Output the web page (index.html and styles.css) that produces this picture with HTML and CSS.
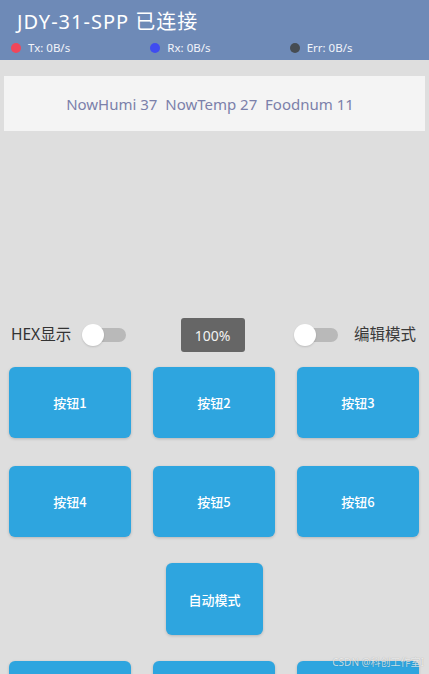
FILE: index.html
```html
<!DOCTYPE html>
<html lang="zh">

<head>
    <meta charset="UTF-8">
    <meta name="viewport" content="width=device-width, initial-scale=1.0">
    <title>JDY-31-SPP</title>
    <link rel="stylesheet" href="styles.css">
</head>

<body>
    <header class="topbar">
        <h1 class="title">JDY-31-SPP 已连接</h1>
        <div class="stats">
            <div class="stat"><span class="dot dot-tx"></span>Tx: 0B/s</div>
            <div class="stat"><span class="dot dot-rx"></span>Rx: 0B/s</div>
            <div class="stat"><span class="dot dot-err"></span>Err: 0B/s</div>
        </div>
    </header>

    <div class="panel">NowHumi 37&nbsp; NowTemp 27&nbsp; Foodnum 11</div>

    <div class="controls">
        <div class="switch-group">
            <span class="label">HEX显示</span>
            <span class="toggle"><span class="knob"></span></span>
        </div>
        <div class="zoom">100%</div>
        <div class="switch-group">
            <span class="toggle"><span class="knob"></span></span>
            <span class="label label-right">编辑模式</span>
        </div>
    </div>

    <div class="buttons">
        <button class="btn">按钮1</button>
        <button class="btn">按钮2</button>
        <button class="btn">按钮3</button>
        <button class="btn">按钮4</button>
        <button class="btn">按钮5</button>
        <button class="btn">按钮6</button>
    </div>

    <div class="center-row">
        <button class="btn btn-auto">自动模式</button>
    </div>

    <!-- next row starts at the bottom edge, labels are out of view -->
    <div class="buttons">
        <button class="btn"></button>
        <button class="btn"></button>
        <button class="btn"></button>
    </div>

    <div class="watermark">CSDN @科创工作室I</div>
</body>

</html>
```

FILE: styles.css
```css
* {
    box-sizing: border-box;
    margin: 0;
    padding: 0;
}

body {
    font-family: 'Noto Sans', 'Noto Sans CJK SC', sans-serif;
    background-color: #dedede;
    width: 429px;
    height: 674px;
    overflow: hidden;
    position: relative;
}

.topbar {
    background-color: #6e8ab7;
    height: 60px;
    padding: 9px 0 0 17px;
    color: #fff;
}

.title {
    font-size: 20px;
    font-weight: 400;
    line-height: 26px;
    letter-spacing: 1px;
}

.stats {
    display: flex;
    margin-left: -6px;
    margin-top: 6px;
}

.stat {
    display: flex;
    align-items: center;
    width: 140px;
    font-size: 11.5px;
    line-height: 14px;
    color: #f2f4fa;
}

.dot {
    width: 10px;
    height: 10px;
    border-radius: 50%;
    margin-right: 7px;
}

.dot-tx { background-color: #f0465a; }
.dot-rx { background-color: #3f4cf0; }
.dot-err { background-color: #464c52; }

.panel {
    margin: 16px 4px 0;
    height: 55px;
    background-color: #f4f4f4;
    color: #7b80aa;
    font-size: 15px;
    display: flex;
    align-items: center;
    justify-content: center;
    padding-right: 9px;
}

.controls {
    display: flex;
    justify-content: space-between;
    align-items: center;
    height: 34px;
    margin-top: 187px;
    padding: 0 13px 0 11px;
}

.switch-group {
    display: flex;
    align-items: center;
    width: 122px;
}

.label {
    font-size: 15.5px;
    line-height: 20px;
    color: #333;
    margin-right: 11px;
    margin-top: -3px;
}

.label-right {
    margin: -3px 0 0 16px;
    color: #3a3a3a;
}

.toggle {
    position: relative;
    width: 44px;
    height: 22px;
    display: inline-block;
}

.toggle::before {
    content: '';
    position: absolute;
    left: 8px;
    right: 0;
    top: 4px;
    height: 14px;
    border-radius: 7px;
    background-color: #b9b9b9;
}

.knob {
    position: absolute;
    left: 0;
    top: 0;
    width: 22px;
    height: 22px;
    border-radius: 50%;
    background-color: #fff;
    box-shadow: 0 1px 2px rgba(0, 0, 0, 0.15);
}

.zoom {
    width: 64px;
    height: 34px;
    background-color: #666;
    color: #f2f2f2;
    border-radius: 3px;
    font-size: 14px;
    display: flex;
    align-items: center;
    justify-content: center;
    margin-left: -2px;
}

.buttons {
    display: grid;
    grid-template-columns: repeat(3, 122px);
    column-gap: 22px;
    row-gap: 28px;
    padding-left: 9px;
    margin-top: 15px;
}

.btn {
    height: 71px;
    border: none;
    border-radius: 6px;
    background-color: #2ea5df;
    color: #fff;
    font-family: 'Noto Sans CJK SC', sans-serif;
    font-size: 13px;
    font-weight: 500;
    box-shadow: 0 1px 3px rgba(0, 0, 0, 0.18);
}

.center-row {
    display: flex;
    justify-content: center;
    margin-top: 26px;
}

.btn-auto {
    width: 97px;
    height: 72px;
}

.center-row + .buttons {
    margin-top: 26px;
}

.watermark {
    position: absolute;
    right: 5px;
    bottom: 5px;
    font-size: 10px;
    color: rgba(255, 255, 255, 0.75);
    text-shadow: 0 0 1px rgba(0, 0, 0, 0.3);
}
```
